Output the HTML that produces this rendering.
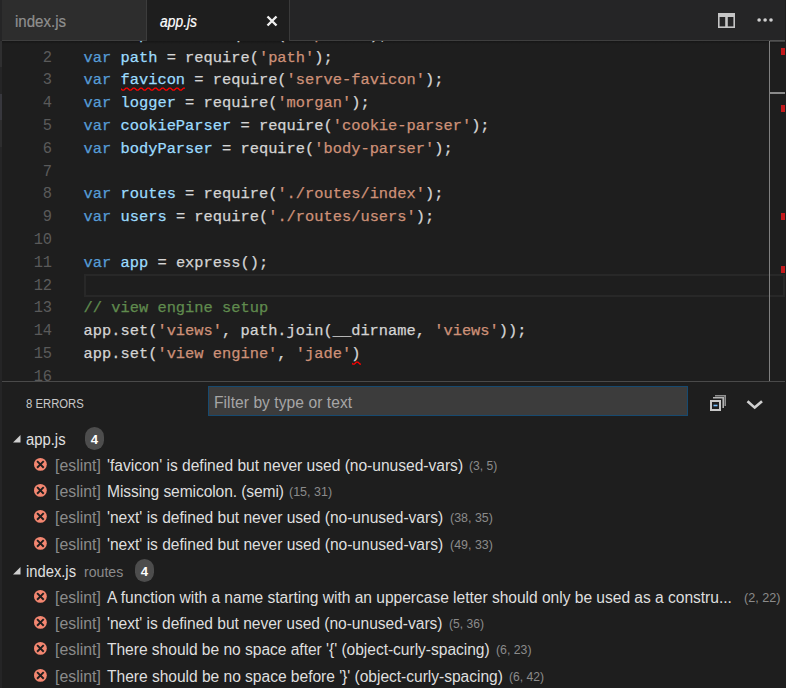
<!DOCTYPE html>
<html>
<head>
<meta charset="utf-8">
<title>app.js</title>
<style>
*{box-sizing:border-box;margin:0;padding:0}
html,body{width:786px;height:688px;overflow:hidden;background:#1e1e1e}
body{position:relative;font-family:"Liberation Sans",sans-serif;color:#d4d4d4}
.abs{position:absolute}
.sx{display:inline-block;transform-origin:0 50%;white-space:nowrap}
#strip{left:0;top:0;width:2px;height:688px;background:#252526}
#strip div{position:absolute;left:0;width:2px}
#ovtop{left:770px;top:40px;width:15px;height:2px;background:linear-gradient(#5a5a5a,#3a3a3a);z-index:5}
#edge{left:785px;top:0;width:1px;height:688px;background:#1e1e1e}
#tabs{left:2px;top:0;width:783px;height:41px;background:#252526;border-bottom:1px solid #3e3e3e}
.tab{position:absolute;top:0;height:40px;font-size:15.6px;line-height:40px;white-space:nowrap}
.tab>span{position:absolute;top:1.95px;-webkit-text-stroke:0.2px}
#tab1{left:0;width:145px;background:#2d2d2d;color:#8f8f8f;border-right:1px solid #3c3c3c}
#tab2{left:145px;width:143px;background:#1e1e1e;color:#fff;font-style:italic;height:41px;border-right:1px solid #3a3a3a}
#editor{left:2px;top:41px;width:783px;height:340px;background:#1e1e1e;overflow:hidden}
#shadow{left:0;top:0;width:783px;height:3px;background:linear-gradient(#161616,#1e1e1e)}
.ln{position:absolute;left:0;height:22.8px;line-height:22.8px;white-space:pre;font-family:"Liberation Mono",monospace;font-size:15.39px}
.num{position:absolute;left:0;width:50.1px;text-align:right;color:#5a5a5a;transform:scaleY(1.12);transform-origin:0 72%}
.code{position:absolute;left:81.6px;color:#d4d4d4;-webkit-text-stroke:0.25px}
.k{color:#569cd6}.v{color:#9cdcfe}.s{color:#ce9178}.c{color:#608b4e}
#curline{left:82px;top:233px;width:701px;height:23px;border:2px solid #282828}
#ovline{left:767px;top:0;width:1px;height:340px;background:#7f7f7f}
#ovcur{left:768px;top:51px;width:15px;height:2px;background:#8a8a8a}
.mk{left:779px;width:4px;height:7px;background:#c4191c}
#panel{left:2px;top:381px;width:783px;height:307px;background:#1e1e1e;border-top:1px solid #4a4a4a}
.row{position:absolute;left:0;width:783px;height:26.4px;line-height:26.4px;font-size:15.6px;white-space:nowrap}
.row>span{position:absolute;top:1px}
.row>span.file,.row>span.dir{top:1.5px}
.src{color:#8b8b8b}
.msg{color:#dedede}
.pos{color:#8b8b8b;font-size:13.2px}
.file{color:#e0e0e0}
.dir{color:#8b8b8b;font-size:14px}
.badge{background:#4d4d4d;color:#fff;border-radius:10px;width:19px;height:22.4px;top:2px !important;text-align:center;font-weight:bold;font-size:13.2px;line-height:25.4px;overflow:hidden}
.ei{position:absolute;left:32.15px;top:6.05px;overflow:visible}
.tw{position:absolute;left:11px;top:10px}
#title{left:24px;top:12px;font-size:13.2px;line-height:20px;color:#c8c8c8}
#filter{left:206px;top:4px;width:480px;height:30px;background:#3c3c3c;border:1px solid #174a70;font-size:15.6px;line-height:28px;color:#a6a6a6;white-space:nowrap}
#filter>span{position:absolute;left:5px;top:2.2px}
</style>
</head>
<body>
<div id="strip" class="abs">
  <div style="top:41px;height:26px;background:#2f2f30"></div>
  <div style="top:94px;height:26px;background:#37373d"></div>
  <div style="top:120px;height:27px;background:#2d2d2e"></div>
</div>
<div id="edge" class="abs"></div>
<div id="ovtop" class="abs"></div>
<div id="tabs" class="abs">
  <div class="tab" id="tab1"><span style="left:13px"><span class="sx" style="transform:scaleX(0.9664)">index.js</span></span></div>
  <div class="tab" id="tab2"><span style="left:13px"><span class="sx" style="transform:scaleX(0.8890)">app.js</span></span>
    <svg class="abs" viewBox="0 0 12 12" width="12" height="12" style="left:119.4px;top:14.6px"><path d="M1.5 1.5 L10.5 10.5 M10.5 1.5 L1.5 10.5" stroke="#f0f0f0" stroke-width="2.4" fill="none"/></svg>
  </div>
  <svg class="abs" viewBox="0 0 17 15" width="17" height="15" style="left:716px;top:13px">
    <rect x="0" y="0" width="17" height="15" fill="#c5c5c5"/>
    <rect x="1.6" y="4" width="5.6" height="9.4" fill="#252526"/>
    <rect x="9.8" y="4" width="5.6" height="9.4" fill="#252526"/>
  </svg>
  <svg class="abs" viewBox="0 0 16 4" width="16" height="4" style="left:755px;top:18px">
    <circle cx="2.1" cy="2" r="1.8" fill="#d0d0d0"/><circle cx="8.1" cy="2" r="1.8" fill="#d0d0d0"/><circle cx="14" cy="2" r="1.8" fill="#d0d0d0"/>
  </svg>
</div>
<div id="editor" class="abs">
  <div class="abs" id="shadow"></div>
  <div class="ln" style="top:-17.2px"><span class="num">1</span><span class="code"><span class="k">var</span> <span class="v">express</span> = require(<span class="s">'express'</span>);</span></div>
  <div class="ln" style="top:5.6px"><span class="num">2</span><span class="code"><span class="k">var</span> <span class="v">path</span> = require(<span class="s">'path'</span>);</span></div>
  <div class="ln" style="top:28.4px"><span class="num">3</span><span class="code"><span class="k">var</span> <span class="v sq">favicon</span> = require(<span class="s">'serve-favicon'</span>);</span></div>
  <div class="ln" style="top:51.2px"><span class="num">4</span><span class="code"><span class="k">var</span> <span class="v">logger</span> = require(<span class="s">'morgan'</span>);</span></div>
  <div class="ln" style="top:74.0px"><span class="num">5</span><span class="code"><span class="k">var</span> <span class="v">cookieParser</span> = require(<span class="s">'cookie-parser'</span>);</span></div>
  <div class="ln" style="top:96.8px"><span class="num">6</span><span class="code"><span class="k">var</span> <span class="v">bodyParser</span> = require(<span class="s">'body-parser'</span>);</span></div>
  <div class="ln" style="top:119.6px"><span class="num">7</span><span class="code"></span></div>
  <div class="ln" style="top:142.4px"><span class="num">8</span><span class="code"><span class="k">var</span> <span class="v">routes</span> = require(<span class="s">'./routes/index'</span>);</span></div>
  <div class="ln" style="top:165.2px"><span class="num">9</span><span class="code"><span class="k">var</span> <span class="v">users</span> = require(<span class="s">'./routes/users'</span>);</span></div>
  <div class="ln" style="top:188.0px"><span class="num">10</span><span class="code"></span></div>
  <div class="ln" style="top:210.8px"><span class="num">11</span><span class="code"><span class="k">var</span> <span class="v">app</span> = express();</span></div>
  <div class="ln" style="top:233.6px"><span class="num">12</span><span class="code"></span></div>
  <div class="ln" style="top:256.4px"><span class="num">13</span><span class="code"><span class="c">// view engine setup</span></span></div>
  <div class="ln" style="top:279.2px"><span class="num">14</span><span class="code">app.set(<span class="s">'views'</span>, path.join(__dirname, <span class="s">'views'</span>));</span></div>
  <div class="ln" style="top:302.0px"><span class="num">15</span><span class="code">app.set(<span class="s">'view engine'</span>, <span class="s">'jade'</span>)</span></div>
  <div class="ln" style="top:324.8px"><span class="num">16</span><span class="code"></span></div>
  <svg class="abs" width="64.20" height="7" viewBox="0 0 64.20 7" style="left:119.00px;top:45.30px;overflow:hidden"><path d="M-12.90 4.20 L-11.70 4.20 L-9.30 2.00 L-8.10 2.00 L-5.70 4.20 L-5.70 4.20 L-4.50 4.20 L-2.10 2.00 L-0.90 2.00 L1.50 4.20 L1.50 4.20 L2.70 4.20 L5.10 2.00 L6.30 2.00 L8.70 4.20 L8.70 4.20 L9.90 4.20 L12.30 2.00 L13.50 2.00 L15.90 4.20 L15.90 4.20 L17.10 4.20 L19.50 2.00 L20.70 2.00 L23.10 4.20 L23.10 4.20 L24.30 4.20 L26.70 2.00 L27.90 2.00 L30.30 4.20 L30.30 4.20 L31.50 4.20 L33.90 2.00 L35.10 2.00 L37.50 4.20 L37.50 4.20 L38.70 4.20 L41.10 2.00 L42.30 2.00 L44.70 4.20 L44.70 4.20 L45.90 4.20 L48.30 2.00 L49.50 2.00 L51.90 4.20 L51.90 4.20 L53.10 4.20 L55.50 2.00 L56.70 2.00 L59.10 4.20 L59.10 4.20 L60.30 4.20 L62.70 2.00 L63.90 2.00 L66.30 4.20 L66.30 4.20 L67.50 4.20 L69.90 2.00 L71.10 2.00 L73.50 4.20" stroke="#f00" stroke-width="1.25" fill="none" stroke-linejoin="round"/></svg>
  <svg class="abs" width="9.10" height="7" viewBox="0 0 9.10 7" style="left:349.90px;top:318.90px;overflow:hidden"><path d="M-13.40 4.20 L-12.20 4.20 L-9.80 2.00 L-8.60 2.00 L-6.20 4.20 L-6.20 4.20 L-5.00 4.20 L-2.60 2.00 L-1.40 2.00 L1.00 4.20 L1.00 4.20 L2.20 4.20 L4.60 2.00 L5.80 2.00 L8.20 4.20 L8.20 4.20 L9.40 4.20 L11.80 2.00 L13.00 2.00 L15.40 4.20 L15.40 4.20 L16.60 4.20 L19.00 2.00 L20.20 2.00 L22.60 4.20" stroke="#f00" stroke-width="1.25" fill="none" stroke-linejoin="round"/></svg>
  <div class="abs" id="curline"></div>
  <div class="abs" id="ovline"></div>
  <div class="abs" id="ovcur"></div>
  <div class="abs mk" style="top:7px"></div>
  <div class="abs mk" style="top:64px"></div>
  <div class="abs mk" style="top:172px"></div>
  <div class="abs mk" style="top:225px"></div>
</div>
<div id="panel" class="abs">
  <div class="abs" id="title"><span class="sx" style="transform:scaleX(0.8570)">8 ERRORS</span></div>
  <div class="abs" id="filter"><span><span class="sx" style="letter-spacing:0.057px">Filter by type or text</span></span></div>
  <svg class="abs" id="collapse" viewBox="0 0 16 16" width="16" height="16" style="left:708px;top:13px">
    <path d="M5 0.8 H15.2 V11" stroke="#8f8f8f" stroke-width="1.6" fill="none"/>
    <path d="M3 2.8 H13.2 V13" stroke="#b4b4b4" stroke-width="1.6" fill="none"/>
    <rect x="1" y="6" width="9" height="9" fill="#1e1e1e" stroke="#c8c8c8" stroke-width="2"/>
    <rect x="3.5" y="9.7" width="4" height="1.6" fill="#75beff"/>
  </svg>
  <svg class="abs" id="chev" viewBox="0 0 18 12" width="18" height="12" style="left:744px;top:17px">
    <path d="M1.5 2.2 L8.7 8.6 L16 2.2" stroke="#d0d0d0" stroke-width="2.6" fill="none"/>
  </svg>

  <div class="row" style="top:43.2px"><svg class="tw" viewBox="0 0 8 8" width="8" height="8"><path d="M0 7.5 L7.5 7.5 L7.5 0 Z" fill="#d0d0d0"/></svg><span class="file" style="left:24.00px"><span class="sx" style="transform:scaleX(0.9503)">app.js</span></span><span class="badge" style="left:83.00px">4</span></div>
  <div class="row" style="top:69.6px"><svg class="ei" viewBox="0 0 12 12" width="12.8" height="12.8"><circle cx="6" cy="6" r="6" fill="#f48771"/><path d="M2.9 2.9 L9.1 9.1 M9.1 2.9 L2.9 9.1" stroke="#1e1e1e" stroke-width="1.8" fill="none"/></svg><span class="src" style="left:53.00px"><span class="sx" style="transform:scaleX(1.0163)">[eslint]</span></span><span class="msg" style="left:105.00px"><span class="sx" style="letter-spacing:-0.018px">'favicon' is defined but never used (no-unused-vars)</span></span><span class="pos" style="left:467.00px"><span class="sx" style="transform:scaleX(0.9205)">(3, 5)</span></span></div>
  <div class="row" style="top:96.0px"><svg class="ei" viewBox="0 0 12 12" width="12.8" height="12.8"><circle cx="6" cy="6" r="6" fill="#f48771"/><path d="M2.9 2.9 L9.1 9.1 M9.1 2.9 L2.9 9.1" stroke="#1e1e1e" stroke-width="1.8" fill="none"/></svg><span class="src" style="left:53.00px"><span class="sx" style="transform:scaleX(1.0163)">[eslint]</span></span><span class="msg" style="left:105.00px"><span class="sx" style="letter-spacing:-0.096px">Missing semicolon. (semi)</span></span><span class="pos" style="left:287.00px"><span class="sx" style="transform:scaleX(0.9472)">(15, 31)</span></span></div>
  <div class="row" style="top:122.4px"><svg class="ei" viewBox="0 0 12 12" width="12.8" height="12.8"><circle cx="6" cy="6" r="6" fill="#f48771"/><path d="M2.9 2.9 L9.1 9.1 M9.1 2.9 L2.9 9.1" stroke="#1e1e1e" stroke-width="1.8" fill="none"/></svg><span class="src" style="left:53.00px"><span class="sx" style="transform:scaleX(1.0163)">[eslint]</span></span><span class="msg" style="left:105.00px"><span class="sx" style="letter-spacing:-0.019px">'next' is defined but never used (no-unused-vars)</span></span><span class="pos" style="left:448.00px"><span class="sx" style="transform:scaleX(0.9427)">(38, 35)</span></span></div>
  <div class="row" style="top:148.8px"><svg class="ei" viewBox="0 0 12 12" width="12.8" height="12.8"><circle cx="6" cy="6" r="6" fill="#f48771"/><path d="M2.9 2.9 L9.1 9.1 M9.1 2.9 L2.9 9.1" stroke="#1e1e1e" stroke-width="1.8" fill="none"/></svg><span class="src" style="left:53.00px"><span class="sx" style="transform:scaleX(1.0163)">[eslint]</span></span><span class="msg" style="left:105.00px"><span class="sx" style="letter-spacing:-0.019px">'next' is defined but never used (no-unused-vars)</span></span><span class="pos" style="left:448.00px"><span class="sx" style="transform:scaleX(0.9427)">(49, 33)</span></span></div>
  <div class="row" style="top:175.2px"><svg class="tw" viewBox="0 0 8 8" width="8" height="8"><path d="M0 7.5 L7.5 7.5 L7.5 0 Z" fill="#d0d0d0"/></svg><span class="file" style="left:24.00px"><span class="sx" style="transform:scaleX(0.9458)">index.js</span></span><span class="dir" style="left:82.00px"><span class="sx" style="transform:scaleX(1.0085)">routes</span></span><span class="badge" style="left:133.00px">4</span></div>
  <div class="row" style="top:201.6px"><svg class="ei" viewBox="0 0 12 12" width="12.8" height="12.8"><circle cx="6" cy="6" r="6" fill="#f48771"/><path d="M2.9 2.9 L9.1 9.1 M9.1 2.9 L2.9 9.1" stroke="#1e1e1e" stroke-width="1.8" fill="none"/></svg><span class="src" style="left:53.00px"><span class="sx" style="transform:scaleX(1.0163)">[eslint]</span></span><span class="msg" style="left:105.00px"><span class="sx" style="letter-spacing:-0.030px">A function with a name starting with an uppercase letter should only be used as a constru...</span></span><span class="pos" style="left:742.00px"><span class="sx" style="transform:scaleX(0.9561)">(2, 22)</span></span></div>
  <div class="row" style="top:228.0px"><svg class="ei" viewBox="0 0 12 12" width="12.8" height="12.8"><circle cx="6" cy="6" r="6" fill="#f48771"/><path d="M2.9 2.9 L9.1 9.1 M9.1 2.9 L2.9 9.1" stroke="#1e1e1e" stroke-width="1.8" fill="none"/></svg><span class="src" style="left:53.00px"><span class="sx" style="transform:scaleX(1.0163)">[eslint]</span></span><span class="msg" style="left:105.00px"><span class="sx" style="letter-spacing:-0.033px">'next' is defined but never used (no-unused-vars)</span></span><span class="pos" style="left:447.00px"><span class="sx" style="transform:scaleX(0.9188)">(5, 36)</span></span></div>
  <div class="row" style="top:254.4px"><svg class="ei" viewBox="0 0 12 12" width="12.8" height="12.8"><circle cx="6" cy="6" r="6" fill="#f48771"/><path d="M2.9 2.9 L9.1 9.1 M9.1 2.9 L2.9 9.1" stroke="#1e1e1e" stroke-width="1.8" fill="none"/></svg><span class="src" style="left:53.00px"><span class="sx" style="transform:scaleX(1.0163)">[eslint]</span></span><span class="msg" style="left:105.00px"><span class="sx" style="letter-spacing:-0.037px">There should be no space after '{' (object-curly-spacing)</span></span><span class="pos" style="left:494.00px"><span class="sx" style="transform:scaleX(0.9323)">(6, 23)</span></span></div>
  <div class="row" style="top:280.8px"><svg class="ei" viewBox="0 0 12 12" width="12.8" height="12.8"><circle cx="6" cy="6" r="6" fill="#f48771"/><path d="M2.9 2.9 L9.1 9.1 M9.1 2.9 L2.9 9.1" stroke="#1e1e1e" stroke-width="1.8" fill="none"/></svg><span class="src" style="left:53.00px"><span class="sx" style="transform:scaleX(1.0163)">[eslint]</span></span><span class="msg" style="left:105.00px"><span class="sx" style="letter-spacing:-0.032px">There should be no space before '}' (object-curly-spacing)</span></span><span class="pos" style="left:507.00px"><span class="sx" style="transform:scaleX(0.9188)">(6, 42)</span></span></div>
</div>
</body>
</html>
